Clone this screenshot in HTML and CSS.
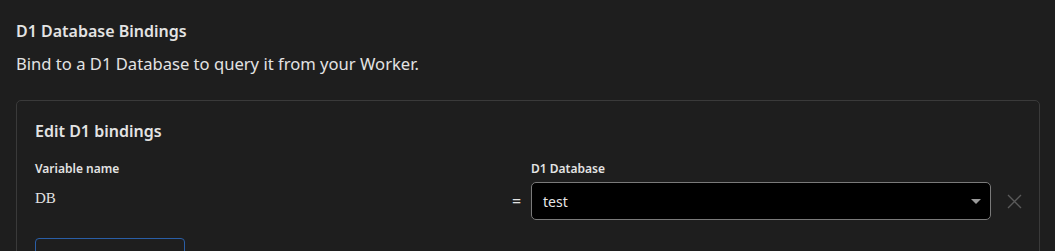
FILE: index.html
```html
<!DOCTYPE html>
<html>
<head>
<meta charset="utf-8">
<link rel="stylesheet" href="styles.css">
</head>
<body>
<section class="bindings">
  <h2 class="title">D1 Database Bindings</h2>
  <p class="subtitle">Bind to a D1 Database to query it from your Worker.</p>
  <div class="card">
    <h3 class="card-title">Edit D1 bindings</h3>
    <div class="grid">
      <div class="label">Variable name</div>
      <div></div>
      <div class="label">D1 Database</div>
      <div></div>
      <div class="var-value">DB</div>
      <div class="eq">=</div>
      <div class="select">
        <span>test</span>
        <span class="caret"></span>
      </div>
      <div class="remove">
        <svg width="15" height="15" viewBox="0 0 15 15"><path d="M1 1L14 14M14 1L1 14" stroke="#5a5a5a" stroke-width="1.4" fill="none"/></svg>
      </div>
    </div>
    <div class="add-btn"></div>
  </div>
</section>
</body>
</html>
```
FILE: styles.css
```css
html, body {
  margin: 0;
  padding: 0;
  background: #1e1e1e;
  height: 100%;
  overflow: hidden;
}
body {
  font-family: "Noto Sans", "Open Sans", sans-serif;
  color: #e3e3e3;
}
.bindings {
  padding: 19px 15px 0 16px;
}
.title {
  margin: 0;
  font-size: 16px;
  font-weight: 600;
  line-height: 24px;
}
.subtitle {
  margin: 9px 0 0;
  font-size: 16.6px;
  font-weight: 400;
  line-height: 24px;
}
.card {
  margin-top: 24px;
  border: 1px solid #3a3a3a;
  border-radius: 5px;
  padding: 18px 18px 0;
  height: 200px;
}
.card-title {
  margin: 0;
  font-size: 16px;
  font-weight: 600;
  line-height: 24px;
}
.grid {
  margin-top: 18px;
  display: grid;
  grid-template-columns: 465px 31px 460px 31px;
  align-items: center;
}
.label {
  font-size: 12px;
  font-weight: 600;
  line-height: 16px;
  margin-bottom: 5px;
}
.var-value {
  font-family: "Liberation Serif", serif;
  font-size: 15px;
  margin-top: -6px;
}
.eq {
  font-size: 16px;
  text-align: center;
  padding-left: 2px;
}
.select {
  box-sizing: border-box;
  height: 38px;
  border: 1px solid #7a7a7a;
  border-radius: 5px;
  background: #000;
  display: flex;
  align-items: center;
  justify-content: space-between;
  padding: 0 9px 0 11px;
  font-size: 14px;
  color: #e6e6e6;
}
.caret {
  width: 0;
  height: 0;
  border-left: 5px solid transparent;
  border-right: 5px solid transparent;
  border-top: 5px solid #9a9a9a;
}
.remove {
  display: flex;
  justify-content: flex-end;
}
.add-btn {
  margin-top: 18px;
  width: 150px;
  height: 40px;
  box-sizing: border-box;
  border: 1px solid #2a5ea6;
  border-radius: 4px;
}
```
